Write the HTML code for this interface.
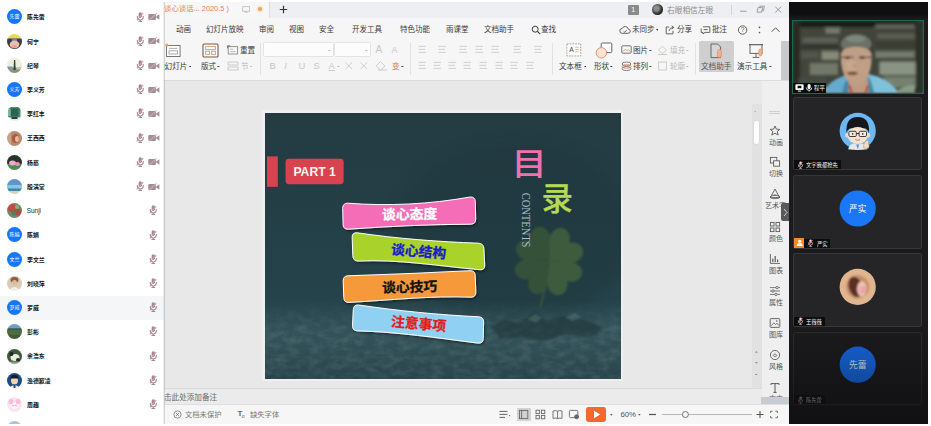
<!DOCTYPE html><html lang="zh"><head><meta charset="utf-8"><title>meeting</title><style>
*{box-sizing:border-box;margin:0;padding:0}
html,body{width:931px;height:426px;overflow:hidden;background:#fff}
body{font-family:"Liberation Sans",sans-serif;position:relative;color:#333}
.a{position:absolute}
.t{position:absolute;white-space:nowrap;line-height:1}
#lp{left:0;top:0;width:164px;height:423.5px;background:#fff;overflow:hidden}
.nm{font-size:5.9px;color:#111;left:26.8px;font-weight:bold}
.av{width:15px;height:15px;border-radius:50%;left:7px;overflow:hidden}
.avb{background:#1677f6;color:#fff;font-size:5px;text-align:center;line-height:15px;white-space:nowrap}
#wps{left:164px;top:2px;width:625px;height:422px;background:#e8e8e8;overflow:hidden}
.mn{font-size:7.45px;color:#3a3a3a;top:23.6px}
.rb{font-size:7.6px;color:#3a3a3a}
.fd{color:#b9b9b9}
.sb{font-size:7px;color:#585858;text-align:center;width:28px;left:0}
#rp{left:789px;top:2px;width:139px;height:421.5px;background:#1b1b1d;overflow:hidden}
.tile{position:absolute;left:4px;width:129.4px;height:73.4px;background:#252527;border:1px solid #37373a;border-radius:2px}
.lab{position:absolute;left:0;bottom:0;height:9px;background:#0c0c0c;color:#fff;font-size:5.3px;line-height:9.8px;white-space:nowrap}
.cj{font-family:"Liberation Sans","Noto Sans CJK SC",sans-serif}
</style></head><body><div id="lp" class="a"><div class="a" style="left:0;top:295.5px;width:164px;height:24.2px;background:#f5f6f8"></div><svg class="a av" style="top:9.4px;background:#1677f6" viewBox="0 0 15 15" role="img" aria-label="先蕾"><text class="cj" x="2.5" y="9.3" font-size="5" fill="#fff">先蕾</text></svg><svg class="a" style="left:26.80px;top:14.30px;overflow:visible" width="18.2" height="5.9" role="img" aria-label="陈先蕾"><text class="cj" x="0" y="5.07" font-size="5.9" font-weight="bold" fill="#111">陈先蕾</text></svg><svg class="a" style="left:136.3px;top:11.5px" width="8.4" height="10.2" viewBox="0 0 9 11"><rect x="2.8" y="0.4" width="3.6" height="6" rx="1.8" fill="#9a8e95"/><path d="M1.4 4.4 v1 a3.2 3.2 0 0 0 6.4 0 v-1" fill="none" stroke="#9a8e95" stroke-width="1.1"/><path d="M4.6 8.6 v1.4 M2.6 10.3 h4" stroke="#9a8e95" stroke-width="1.1"/><path d="M.8 9 L7.8 1.2" stroke="#e8959d" stroke-width="1.2"/></svg><svg class="a" style="left:148.0px;top:13.0px" width="12" height="8" viewBox="0 0 12 8"><rect x=".3" y="1" width="7.6" height="6" rx="1" fill="#9a9096"/><path d="M8.2 3.6 L11.4 1.2 V6.8 L8.2 4.6Z" fill="#9a9096"/><path d="M1 7.4 L8.6 .4" stroke="#eba4aa" stroke-width="1.1"/></svg><svg class="a av" style="top:33.7px" viewBox="0 0 30 30"><g filter="url(#bl1)"><rect width="30" height="30" fill="#4a3a32"/><ellipse cx="15" cy="6" rx="14" ry="8" fill="#ead85c"/><rect x="2" y="9" width="26" height="7" rx="2" fill="#3b3763"/><rect x="10" y="10.4" width="10" height="4" fill="#8e8fa8"/><ellipse cx="15" cy="21" rx="9.6" ry="7.6" fill="#ecc0ae"/><ellipse cx="15" cy="25" rx="5" ry="3" fill="#e79a8e"/></g></svg><svg class="a" style="left:26.80px;top:38.60px;overflow:visible" width="12.3" height="5.9" role="img" aria-label="何宁"><text class="cj" x="0" y="5.07" font-size="5.9" font-weight="bold" fill="#111">何宁</text></svg><svg class="a" style="left:136.3px;top:35.8px" width="8.4" height="10.2" viewBox="0 0 9 11"><rect x="2.8" y="0.4" width="3.6" height="6" rx="1.8" fill="#9a8e95"/><path d="M1.4 4.4 v1 a3.2 3.2 0 0 0 6.4 0 v-1" fill="none" stroke="#9a8e95" stroke-width="1.1"/><path d="M4.6 8.6 v1.4 M2.6 10.3 h4" stroke="#9a8e95" stroke-width="1.1"/><path d="M.8 9 L7.8 1.2" stroke="#e8959d" stroke-width="1.2"/></svg><svg class="a" style="left:148.0px;top:37.3px" width="12" height="8" viewBox="0 0 12 8"><rect x=".3" y="1" width="7.6" height="6" rx="1" fill="#9a9096"/><path d="M8.2 3.6 L11.4 1.2 V6.8 L8.2 4.6Z" fill="#9a9096"/><path d="M1 7.4 L8.6 .4" stroke="#eba4aa" stroke-width="1.1"/></svg><svg class="a av" style="top:57.9px" viewBox="0 0 30 30"><g filter="url(#bl1)"><rect width="30" height="30" fill="#eeeee0"/><rect y="19" width="30" height="11" fill="#8b9171"/><rect x="0" y="17" width="11" height="9" fill="#7f97a3"/><rect x="19" y="18" width="11" height="5" fill="#c9c8ae"/><path d="M14 4 L16.4 4 L17.4 24 L13 24Z" fill="#39403a"/></g></svg><svg class="a" style="left:26.80px;top:62.80px;overflow:visible" width="12.3" height="5.9" role="img" aria-label="纪琴"><text class="cj" x="0" y="5.07" font-size="5.9" font-weight="bold" fill="#111">纪琴</text></svg><svg class="a" style="left:136.3px;top:60.0px" width="8.4" height="10.2" viewBox="0 0 9 11"><rect x="2.8" y="0.4" width="3.6" height="6" rx="1.8" fill="#9a8e95"/><path d="M1.4 4.4 v1 a3.2 3.2 0 0 0 6.4 0 v-1" fill="none" stroke="#9a8e95" stroke-width="1.1"/><path d="M4.6 8.6 v1.4 M2.6 10.3 h4" stroke="#9a8e95" stroke-width="1.1"/><path d="M.8 9 L7.8 1.2" stroke="#e8959d" stroke-width="1.2"/></svg><svg class="a" style="left:148.0px;top:61.5px" width="12" height="8" viewBox="0 0 12 8"><rect x=".3" y="1" width="7.6" height="6" rx="1" fill="#9a9096"/><path d="M8.2 3.6 L11.4 1.2 V6.8 L8.2 4.6Z" fill="#9a9096"/><path d="M1 7.4 L8.6 .4" stroke="#eba4aa" stroke-width="1.1"/></svg><svg class="a av" style="top:82.1px;background:#1677f6" viewBox="0 0 15 15" role="img" aria-label="义芳"><text class="cj" x="2.5" y="9.3" font-size="5" fill="#fff">义芳</text></svg><svg class="a" style="left:26.80px;top:87.00px;overflow:visible" width="18.2" height="5.9" role="img" aria-label="李义芳"><text class="cj" x="0" y="5.07" font-size="5.9" font-weight="bold" fill="#111">李义芳</text></svg><svg class="a" style="left:136.3px;top:84.2px" width="8.4" height="10.2" viewBox="0 0 9 11"><rect x="2.8" y="0.4" width="3.6" height="6" rx="1.8" fill="#9a8e95"/><path d="M1.4 4.4 v1 a3.2 3.2 0 0 0 6.4 0 v-1" fill="none" stroke="#9a8e95" stroke-width="1.1"/><path d="M4.6 8.6 v1.4 M2.6 10.3 h4" stroke="#9a8e95" stroke-width="1.1"/><path d="M.8 9 L7.8 1.2" stroke="#e8959d" stroke-width="1.2"/></svg><svg class="a" style="left:148.0px;top:85.7px" width="12" height="8" viewBox="0 0 12 8"><rect x=".3" y="1" width="7.6" height="6" rx="1" fill="#9a9096"/><path d="M8.2 3.6 L11.4 1.2 V6.8 L8.2 4.6Z" fill="#9a9096"/><path d="M1 7.4 L8.6 .4" stroke="#eba4aa" stroke-width="1.1"/></svg><svg class="a av" style="top:106.3px" viewBox="0 0 30 30"><g filter="url(#bl1)"><rect width="30" height="30" fill="#f3f7f4"/><rect x="2" y="2" width="25" height="21" rx="3" fill="#4a8a72"/><rect x="8" y="5" width="15" height="16" fill="#2d6252"/><rect x="2" y="6" width="5" height="14" fill="#7db49a"/><rect x="9" y="22" width="12" height="4" fill="#27413a"/><rect x="6" y="26" width="18" height="3" fill="#dfe7e3"/></g></svg><svg class="a" style="left:26.80px;top:111.20px;overflow:visible" width="18.2" height="5.9" role="img" aria-label="李红丰"><text class="cj" x="0" y="5.07" font-size="5.9" font-weight="bold" fill="#111">李红丰</text></svg><svg class="a" style="left:136.3px;top:108.4px" width="8.4" height="10.2" viewBox="0 0 9 11"><rect x="2.8" y="0.4" width="3.6" height="6" rx="1.8" fill="#9a8e95"/><path d="M1.4 4.4 v1 a3.2 3.2 0 0 0 6.4 0 v-1" fill="none" stroke="#9a8e95" stroke-width="1.1"/><path d="M4.6 8.6 v1.4 M2.6 10.3 h4" stroke="#9a8e95" stroke-width="1.1"/><path d="M.8 9 L7.8 1.2" stroke="#e8959d" stroke-width="1.2"/></svg><svg class="a" style="left:148.0px;top:109.9px" width="12" height="8" viewBox="0 0 12 8"><rect x=".3" y="1" width="7.6" height="6" rx="1" fill="#9a9096"/><path d="M8.2 3.6 L11.4 1.2 V6.8 L8.2 4.6Z" fill="#9a9096"/><path d="M1 7.4 L8.6 .4" stroke="#eba4aa" stroke-width="1.1"/></svg><svg class="a av" style="top:130.5px" viewBox="0 0 30 30"><g filter="url(#bl1)"><rect width="30" height="30" fill="#b98a6c"/><ellipse cx="17" cy="15" rx="7" ry="9" fill="#a65c48"/><ellipse cx="20" cy="16" rx="4" ry="6" fill="#e5b79a"/><rect x="0" y="0" width="8" height="30" fill="#c9a184"/></g></svg><svg class="a" style="left:26.80px;top:135.40px;overflow:visible" width="18.2" height="5.9" role="img" aria-label="王西西"><text class="cj" x="0" y="5.07" font-size="5.9" font-weight="bold" fill="#111">王西西</text></svg><svg class="a" style="left:136.3px;top:132.6px" width="8.4" height="10.2" viewBox="0 0 9 11"><rect x="2.8" y="0.4" width="3.6" height="6" rx="1.8" fill="#9a8e95"/><path d="M1.4 4.4 v1 a3.2 3.2 0 0 0 6.4 0 v-1" fill="none" stroke="#9a8e95" stroke-width="1.1"/><path d="M4.6 8.6 v1.4 M2.6 10.3 h4" stroke="#9a8e95" stroke-width="1.1"/><path d="M.8 9 L7.8 1.2" stroke="#e8959d" stroke-width="1.2"/></svg><svg class="a" style="left:148.0px;top:134.1px" width="12" height="8" viewBox="0 0 12 8"><rect x=".3" y="1" width="7.6" height="6" rx="1" fill="#9a9096"/><path d="M8.2 3.6 L11.4 1.2 V6.8 L8.2 4.6Z" fill="#9a9096"/><path d="M1 7.4 L8.6 .4" stroke="#eba4aa" stroke-width="1.1"/></svg><svg class="a av" style="top:154.8px" viewBox="0 0 30 30"><g filter="url(#bl1)"><rect width="30" height="30" fill="#27352a"/><rect y="18" width="30" height="12" fill="#4f8a4a"/><ellipse cx="11" cy="16" rx="7" ry="5" fill="#f0a9cf"/><ellipse cx="21" cy="18" rx="5" ry="4" fill="#e98cc0"/></g></svg><svg class="a" style="left:26.80px;top:159.70px;overflow:visible" width="12.3" height="5.9" role="img" aria-label="杨慈"><text class="cj" x="0" y="5.07" font-size="5.9" font-weight="bold" fill="#111">杨慈</text></svg><svg class="a" style="left:136.3px;top:156.9px" width="8.4" height="10.2" viewBox="0 0 9 11"><rect x="2.8" y="0.4" width="3.6" height="6" rx="1.8" fill="#9a8e95"/><path d="M1.4 4.4 v1 a3.2 3.2 0 0 0 6.4 0 v-1" fill="none" stroke="#9a8e95" stroke-width="1.1"/><path d="M4.6 8.6 v1.4 M2.6 10.3 h4" stroke="#9a8e95" stroke-width="1.1"/><path d="M.8 9 L7.8 1.2" stroke="#e8959d" stroke-width="1.2"/></svg><svg class="a" style="left:148.0px;top:158.4px" width="12" height="8" viewBox="0 0 12 8"><rect x=".3" y="1" width="7.6" height="6" rx="1" fill="#9a9096"/><path d="M8.2 3.6 L11.4 1.2 V6.8 L8.2 4.6Z" fill="#9a9096"/><path d="M1 7.4 L8.6 .4" stroke="#eba4aa" stroke-width="1.1"/></svg><svg class="a av" style="top:179.0px" viewBox="0 0 30 30"><g filter="url(#bl1)"><rect width="30" height="30" fill="#5b97c8"/><rect y="12" width="30" height="8" fill="#8fc3df"/><rect y="19" width="30" height="5" fill="#3f86a8"/><rect y="24" width="30" height="6" fill="#d8d2bd"/></g></svg><svg class="a" style="left:26.80px;top:183.90px;overflow:visible" width="18.2" height="5.9" role="img" aria-label="殷满堂"><text class="cj" x="0" y="5.07" font-size="5.9" font-weight="bold" fill="#111">殷满堂</text></svg><svg class="a" style="left:136.3px;top:181.1px" width="8.4" height="10.2" viewBox="0 0 9 11"><rect x="2.8" y="0.4" width="3.6" height="6" rx="1.8" fill="#9a8e95"/><path d="M1.4 4.4 v1 a3.2 3.2 0 0 0 6.4 0 v-1" fill="none" stroke="#9a8e95" stroke-width="1.1"/><path d="M4.6 8.6 v1.4 M2.6 10.3 h4" stroke="#9a8e95" stroke-width="1.1"/><path d="M.8 9 L7.8 1.2" stroke="#e8959d" stroke-width="1.2"/></svg><svg class="a" style="left:148.0px;top:182.6px" width="12" height="8" viewBox="0 0 12 8"><rect x=".3" y="1" width="7.6" height="6" rx="1" fill="#9a9096"/><path d="M8.2 3.6 L11.4 1.2 V6.8 L8.2 4.6Z" fill="#9a9096"/><path d="M1 7.4 L8.6 .4" stroke="#eba4aa" stroke-width="1.1"/></svg><svg class="a av" style="top:203.2px" viewBox="0 0 30 30"><g filter="url(#bl1)"><rect width="30" height="30" fill="#6f8a63"/><circle cx="10" cy="10" r="8" fill="#c44a3f"/><circle cx="21" cy="18" r="7" fill="#b5493f"/><circle cx="14" cy="20" r="5" fill="#4f7d6a"/><circle cx="20" cy="8" r="4" fill="#8fae8a"/></g></svg><div class="t" style="left:26.8px;top:207.6px;font-size:6.4px;color:#222">Sunji</div><svg class="a" style="left:149.2px;top:205.3px" width="8.4" height="10.2" viewBox="0 0 9 11"><rect x="2.8" y="0.4" width="3.6" height="6" rx="1.8" fill="#9a8e95"/><path d="M1.4 4.4 v1 a3.2 3.2 0 0 0 6.4 0 v-1" fill="none" stroke="#9a8e95" stroke-width="1.1"/><path d="M4.6 8.6 v1.4 M2.6 10.3 h4" stroke="#9a8e95" stroke-width="1.1"/><path d="M.8 9 L7.8 1.2" stroke="#e8959d" stroke-width="1.2"/></svg><svg class="a av" style="top:227.4px;background:#1677f6" viewBox="0 0 15 15" role="img" aria-label="陈娟"><text class="cj" x="2.5" y="9.3" font-size="5" fill="#fff">陈娟</text></svg><svg class="a" style="left:26.80px;top:232.30px;overflow:visible" width="12.3" height="5.9" role="img" aria-label="陈娟"><text class="cj" x="0" y="5.07" font-size="5.9" font-weight="bold" fill="#111">陈娟</text></svg><svg class="a" style="left:149.2px;top:229.5px" width="8.4" height="10.2" viewBox="0 0 9 11"><rect x="2.8" y="0.4" width="3.6" height="6" rx="1.8" fill="#9a8e95"/><path d="M1.4 4.4 v1 a3.2 3.2 0 0 0 6.4 0 v-1" fill="none" stroke="#9a8e95" stroke-width="1.1"/><path d="M4.6 8.6 v1.4 M2.6 10.3 h4" stroke="#9a8e95" stroke-width="1.1"/><path d="M.8 9 L7.8 1.2" stroke="#e8959d" stroke-width="1.2"/></svg><svg class="a av" style="top:251.6px;background:#1677f6" viewBox="0 0 15 15" role="img" aria-label="文兰"><text class="cj" x="2.5" y="9.3" font-size="5" fill="#fff">文兰</text></svg><svg class="a" style="left:26.80px;top:256.50px;overflow:visible" width="18.2" height="5.9" role="img" aria-label="李文兰"><text class="cj" x="0" y="5.07" font-size="5.9" font-weight="bold" fill="#111">李文兰</text></svg><svg class="a" style="left:149.2px;top:253.7px" width="8.4" height="10.2" viewBox="0 0 9 11"><rect x="2.8" y="0.4" width="3.6" height="6" rx="1.8" fill="#9a8e95"/><path d="M1.4 4.4 v1 a3.2 3.2 0 0 0 6.4 0 v-1" fill="none" stroke="#9a8e95" stroke-width="1.1"/><path d="M4.6 8.6 v1.4 M2.6 10.3 h4" stroke="#9a8e95" stroke-width="1.1"/><path d="M.8 9 L7.8 1.2" stroke="#e8959d" stroke-width="1.2"/></svg><svg class="a av" style="top:275.9px" viewBox="0 0 30 30"><g filter="url(#bl1)"><rect width="30" height="30" fill="#d6ccb8"/><ellipse cx="15" cy="8" rx="8" ry="6" fill="#8c5f3f"/><ellipse cx="15" cy="13" rx="5" ry="5" fill="#e3b796"/><path d="M3 30 Q15 14 27 30Z" fill="#f1efe8"/></g></svg><svg class="a" style="left:26.80px;top:280.80px;overflow:visible" width="18.2" height="5.9" role="img" aria-label="刘晓萍"><text class="cj" x="0" y="5.07" font-size="5.9" font-weight="bold" fill="#111">刘晓萍</text></svg><svg class="a" style="left:149.2px;top:278.0px" width="8.4" height="10.2" viewBox="0 0 9 11"><rect x="2.8" y="0.4" width="3.6" height="6" rx="1.8" fill="#9a8e95"/><path d="M1.4 4.4 v1 a3.2 3.2 0 0 0 6.4 0 v-1" fill="none" stroke="#9a8e95" stroke-width="1.1"/><path d="M4.6 8.6 v1.4 M2.6 10.3 h4" stroke="#9a8e95" stroke-width="1.1"/><path d="M.8 9 L7.8 1.2" stroke="#e8959d" stroke-width="1.2"/></svg><svg class="a av" style="top:300.1px;background:#1677f6" viewBox="0 0 15 15" role="img" aria-label="罗威"><text class="cj" x="2.5" y="9.3" font-size="5" fill="#fff">罗威</text></svg><svg class="a" style="left:26.80px;top:305.00px;overflow:visible" width="12.3" height="5.9" role="img" aria-label="罗威"><text class="cj" x="0" y="5.07" font-size="5.9" font-weight="bold" fill="#111">罗威</text></svg><svg class="a" style="left:149.2px;top:302.2px" width="8.4" height="10.2" viewBox="0 0 9 11"><rect x="2.8" y="0.4" width="3.6" height="6" rx="1.8" fill="#9a8e95"/><path d="M1.4 4.4 v1 a3.2 3.2 0 0 0 6.4 0 v-1" fill="none" stroke="#9a8e95" stroke-width="1.1"/><path d="M4.6 8.6 v1.4 M2.6 10.3 h4" stroke="#9a8e95" stroke-width="1.1"/><path d="M.8 9 L7.8 1.2" stroke="#e8959d" stroke-width="1.2"/></svg><svg class="a av" style="top:324.3px" viewBox="0 0 30 30"><g filter="url(#bl1)"><rect width="30" height="30" fill="#4d6a3f"/><rect width="30" height="9" fill="#6f9fc4"/><rect y="9" width="30" height="3" fill="#3d5d54"/><rect y="22" width="30" height="8" fill="#3f5a36"/></g></svg><svg class="a" style="left:26.80px;top:329.20px;overflow:visible" width="12.3" height="5.9" role="img" aria-label="彭彬"><text class="cj" x="0" y="5.07" font-size="5.9" font-weight="bold" fill="#111">彭彬</text></svg><svg class="a" style="left:149.2px;top:326.4px" width="8.4" height="10.2" viewBox="0 0 9 11"><rect x="2.8" y="0.4" width="3.6" height="6" rx="1.8" fill="#9a8e95"/><path d="M1.4 4.4 v1 a3.2 3.2 0 0 0 6.4 0 v-1" fill="none" stroke="#9a8e95" stroke-width="1.1"/><path d="M4.6 8.6 v1.4 M2.6 10.3 h4" stroke="#9a8e95" stroke-width="1.1"/><path d="M.8 9 L7.8 1.2" stroke="#e8959d" stroke-width="1.2"/></svg><svg class="a av" style="top:348.5px" viewBox="0 0 30 30"><g filter="url(#bl1)"><rect width="30" height="30" fill="#3d5a3c"/><ellipse cx="16" cy="17" rx="9" ry="7" fill="#ecece6"/><circle cx="9" cy="10" r="4" fill="#222"/><circle cx="22" cy="22" r="4" fill="#2a2a2a"/><rect y="25" width="30" height="5" fill="#8aa07c"/></g></svg><svg class="a" style="left:26.80px;top:353.40px;overflow:visible" width="18.2" height="5.9" role="img" aria-label="余浩东"><text class="cj" x="0" y="5.07" font-size="5.9" font-weight="bold" fill="#111">余浩东</text></svg><svg class="a" style="left:149.2px;top:350.6px" width="8.4" height="10.2" viewBox="0 0 9 11"><rect x="2.8" y="0.4" width="3.6" height="6" rx="1.8" fill="#9a8e95"/><path d="M1.4 4.4 v1 a3.2 3.2 0 0 0 6.4 0 v-1" fill="none" stroke="#9a8e95" stroke-width="1.1"/><path d="M4.6 8.6 v1.4 M2.6 10.3 h4" stroke="#9a8e95" stroke-width="1.1"/><path d="M.8 9 L7.8 1.2" stroke="#e8959d" stroke-width="1.2"/></svg><svg class="a av" style="top:372.7px" viewBox="0 0 30 30"><g filter="url(#bl1)"><rect width="30" height="30" fill="#1f4c86"/><ellipse cx="15" cy="15" rx="7" ry="8" fill="#f0d2b5"/><path d="M7 12 Q15 0 23 12 L23 9 Q15 -2 7 9Z" fill="#1a1a22"/><rect x="8" y="5" width="14" height="6" fill="#1a1a22"/><path d="M4 30 Q15 18 26 30Z" fill="#e8eef5"/><rect x="13" y="23" width="4" height="7" fill="#27436b"/></g></svg><svg class="a" style="left:26.80px;top:377.60px;overflow:visible" width="24.1" height="5.9" role="img" aria-label="渔德歉凌"><text class="cj" x="0" y="5.07" font-size="5.9" font-weight="bold" fill="#111">渔德歉凌</text></svg><svg class="a" style="left:149.2px;top:374.8px" width="8.4" height="10.2" viewBox="0 0 9 11"><rect x="2.8" y="0.4" width="3.6" height="6" rx="1.8" fill="#9a8e95"/><path d="M1.4 4.4 v1 a3.2 3.2 0 0 0 6.4 0 v-1" fill="none" stroke="#9a8e95" stroke-width="1.1"/><path d="M4.6 8.6 v1.4 M2.6 10.3 h4" stroke="#9a8e95" stroke-width="1.1"/><path d="M.8 9 L7.8 1.2" stroke="#e8959d" stroke-width="1.2"/></svg><svg class="a av" style="top:397.0px" viewBox="0 0 30 30"><g filter="url(#bl1)"><rect width="30" height="30" fill="#fbe3ef"/><ellipse cx="15" cy="17" rx="8" ry="7" fill="#fff3f5"/><circle cx="8" cy="9" r="5" fill="#f5bdd8"/><circle cx="22" cy="9" r="5" fill="#f5bdd8"/><circle cx="12" cy="17" r="1.3" fill="#c89"/><circle cx="18" cy="17" r="1.3" fill="#c89"/></g></svg><svg class="a" style="left:26.80px;top:401.90px;overflow:visible" width="12.3" height="5.9" role="img" aria-label="周趣"><text class="cj" x="0" y="5.07" font-size="5.9" font-weight="bold" fill="#111">周趣</text></svg><svg class="a" style="left:149.2px;top:399.1px" width="8.4" height="10.2" viewBox="0 0 9 11"><rect x="2.8" y="0.4" width="3.6" height="6" rx="1.8" fill="#9a8e95"/><path d="M1.4 4.4 v1 a3.2 3.2 0 0 0 6.4 0 v-1" fill="none" stroke="#9a8e95" stroke-width="1.1"/><path d="M4.6 8.6 v1.4 M2.6 10.3 h4" stroke="#9a8e95" stroke-width="1.1"/><path d="M.8 9 L7.8 1.2" stroke="#e8959d" stroke-width="1.2"/></svg><svg class="a av" style="top:421.2px" viewBox="0 0 30 30"><g filter="url(#bl1)"><rect width="30" height="30" fill="#a9c4d6"/></g></svg></div><div id="wps" class="a"><div class="a" style="left:0;top:0;width:625px;height:16px;background:#eeeff2"></div><div class="a" style="left:0;top:0;width:105.5px;height:16px;background:#f7f7f7;border-right:1px solid #dcdde0"></div><svg class="a" style="left:0.00px;top:3.40px;overflow:visible" width="64.7" height="7.4" role="img" aria-label="谈心谈话... 2020.5 )"><text class="cj" x="0" y="6.36" font-size="7.4" fill="#e8854a">谈心谈话... 2020.5 )</text></svg><svg class="a" style="left:78px;top:3.5px" width="8.4" height="7.6" viewBox="0 0 10 9"><rect x=".8" y=".8" width="8.4" height="5.4" fill="none" stroke="#b5b5b5" stroke-width=".9"/><path d="M5 6.2 V8 M3 8.3 H7" stroke="#b5b5b5" stroke-width=".9"/></svg><div class="a" style="left:93.8px;top:5px;width:4.4px;height:4.4px;border-radius:50%;background:#e9a55c;box-shadow:0 0 0 1.5px #f7e6d2"></div><svg class="a" style="left:115.0px;top:3px" width="9" height="9" viewBox="0 0 9 9"><path d="M4.5 .8 V8.2 M.8 4.5 H8.2" stroke="#333" stroke-width="1.2"/></svg><div class="a" style="left:464px;top:3.2px;width:10.5px;height:9.6px;background:#8a8a8a;color:#fff;font-size:7px;line-height:9.6px;text-align:center;border-radius:1px">1</div><div class="a" style="left:488px;top:2.4px;width:10.6px;height:10.6px;border-radius:50%;background:radial-gradient(circle at 40% 40%,#8b8b8b 0 25%,#2a2a2a 60%)"></div><svg class="a" style="left:503.00px;top:3.80px;overflow:visible" width="46.7" height="7.7" role="img" aria-label="右眼相信左眼"><text class="cj" x="0" y="6.62" font-size="7.7" fill="#8c8c8c">右眼相信左眼</text></svg><div class="a" style="left:567px;top:3px;width:1px;height:10px;background:#d2d2d2"></div><svg class="a" style="left:574px;top:2px" width="50" height="12" viewBox="0 0 50 12"><path d="M2 7.2 H8.6" stroke="#999" stroke-width="1"/><path d="M19.3 3.6 h4.6 v4.6 h-4.6z M20.8 3.6 V2.2 h4.6 v4.6 h-1.4" fill="none" stroke="#999" stroke-width=".9" transform="skewX(-12) translate(1.5 0)"/><path d="M37.2 2.6 L43.2 8.6 M43.2 2.6 L37.2 8.6" stroke="#999" stroke-width="1"/></svg><div class="a" style="left:0;top:16px;width:625px;height:62.6px;background:#f6f6f6;border-bottom:1px solid #dcdcdc"></div><svg class="a" style="left:12.00px;top:23.60px;overflow:visible" width="15.4" height="7.5" role="img" aria-label="动画"><text class="cj" x="0" y="6.41" font-size="7.5" fill="#3a3a3a">动画</text></svg><svg class="a" style="left:41.60px;top:23.60px;overflow:visible" width="37.8" height="7.5" role="img" aria-label="幻灯片放映"><text class="cj" x="0" y="6.41" font-size="7.5" fill="#3a3a3a">幻灯片放映</text></svg><svg class="a" style="left:95.00px;top:23.60px;overflow:visible" width="15.4" height="7.5" role="img" aria-label="审阅"><text class="cj" x="0" y="6.41" font-size="7.5" fill="#3a3a3a">审阅</text></svg><svg class="a" style="left:125.20px;top:23.60px;overflow:visible" width="15.4" height="7.5" role="img" aria-label="视图"><text class="cj" x="0" y="6.41" font-size="7.5" fill="#3a3a3a">视图</text></svg><svg class="a" style="left:155.00px;top:23.60px;overflow:visible" width="15.4" height="7.5" role="img" aria-label="安全"><text class="cj" x="0" y="6.41" font-size="7.5" fill="#3a3a3a">安全</text></svg><svg class="a" style="left:187.50px;top:23.60px;overflow:visible" width="30.3" height="7.5" role="img" aria-label="开发工具"><text class="cj" x="0" y="6.41" font-size="7.5" fill="#3a3a3a">开发工具</text></svg><svg class="a" style="left:235.50px;top:23.60px;overflow:visible" width="30.3" height="7.5" role="img" aria-label="特色功能"><text class="cj" x="0" y="6.41" font-size="7.5" fill="#3a3a3a">特色功能</text></svg><svg class="a" style="left:282.00px;top:23.60px;overflow:visible" width="22.9" height="7.5" role="img" aria-label="雨课堂"><text class="cj" x="0" y="6.41" font-size="7.5" fill="#3a3a3a">雨课堂</text></svg><svg class="a" style="left:320.00px;top:23.60px;overflow:visible" width="30.3" height="7.5" role="img" aria-label="文档助手"><text class="cj" x="0" y="6.41" font-size="7.5" fill="#3a3a3a">文档助手</text></svg><svg class="a" style="left:376.50px;top:23.60px;overflow:visible" width="15.4" height="7.5" role="img" aria-label="查找"><text class="cj" x="0" y="6.41" font-size="7.5" fill="#3a3a3a">查找</text></svg><svg class="a" style="left:366.6px;top:22.6px" width="10" height="10" viewBox="0 0 10 10"><circle cx="4.2" cy="4.2" r="3" fill="none" stroke="#3a3a3a" stroke-width="1"/><path d="M6.4 6.4 L9.2 9.2" stroke="#3a3a3a" stroke-width="1.1"/></svg><svg class="a" style="left:455.0px;top:22.5px" width="12" height="10" viewBox="0 0 12 10"><path d="M3.2 8.3 a2.4 2.4 0 0 1 0-4.8 a3.2 3.2 0 0 1 6.1.6 a2.1 2.1 0 0 1 -.3 4.2 z" fill="none" stroke="#555" stroke-width=".9"/><path d="M4.6 6.2 l1.2 1.1 l2-2.3" fill="none" stroke="#555" stroke-width=".8"/></svg><svg class="a" style="left:467.50px;top:23.60px;overflow:visible" width="22.9" height="7.5" role="img" aria-label="未同步"><text class="cj" x="0" y="6.41" font-size="7.5" fill="#3a3a3a">未同步</text></svg><svg class="a" style="left:491.80px;top:27.10px" width="2.70" height="1.70"><path d="M0 0 H2.70 L1.35 1.70Z" fill="#3a3a3a"/></svg><svg class="a" style="left:500.5px;top:22.5px" width="10" height="10" viewBox="0 0 10 10"><path d="M4.2 2 H1.2 V8.8 H8 V5.8" fill="none" stroke="#555" stroke-width=".9"/><path d="M4 6 Q4.4 2.6 8.6 2.4 M6.6 .8 L8.8 2.4 L6.8 4.2" fill="none" stroke="#555" stroke-width=".9"/></svg><svg class="a" style="left:512.80px;top:23.60px;overflow:visible" width="15.4" height="7.5" role="img" aria-label="分享"><text class="cj" x="0" y="6.41" font-size="7.5" fill="#3a3a3a">分享</text></svg><svg class="a" style="left:535.5px;top:22.5px" width="11" height="10" viewBox="0 0 11 10"><path d="M3 1.8 H9.8 V7.4 H5 L3 9 V7.4 H1.2 V3.6" fill="none" stroke="#555" stroke-width=".9"/><path d="M3.6 4.6 H7.6" stroke="#555" stroke-width=".9"/></svg><svg class="a" style="left:548.20px;top:23.60px;overflow:visible" width="15.4" height="7.5" role="img" aria-label="批注"><text class="cj" x="0" y="6.41" font-size="7.5" fill="#3a3a3a">批注</text></svg><svg class="a" style="left:572.6px;top:21.6px" width="48" height="12" viewBox="0 0 48 12"><circle cx="5.6" cy="6" r="4.2" fill="none" stroke="#555" stroke-width=".9"/><text x="5.6" y="8.4" font-size="6.6" text-anchor="middle" fill="#555" font-family="Liberation Sans">?</text><circle cx="22.5" cy="3.4" r=".8" fill="#555"/><circle cx="22.5" cy="8.6" r=".8" fill="#555"/><path d="M34.6 7.8 L38.6 3.8 L42.6 7.8" fill="none" stroke="#555" stroke-width="1"/></svg><svg class="a" style="left:0.5px;top:40.5px" width="17" height="15" viewBox="0 0 17 15"><rect x="1.5" y="2.5" width="13.6" height="11" fill="#fff" stroke="#777" stroke-width="1"/><rect x="4" y="7.8" width="8.4" height="3.2" fill="none" stroke="#999" stroke-width=".8"/><path d="M4 5.4 H12.4" stroke="#999" stroke-width=".8"/><circle cx="1.8" cy="2.2" r="1.6" fill="#f0a057"/></svg><svg class="a" style="left:-7.40px;top:60.00px;overflow:visible" width="30.9" height="7.6" role="img" aria-label="建幻灯片"><text class="cj" x="0" y="6.54" font-size="7.6" fill="#3a3a3a">建幻灯片</text></svg><svg class="a" style="left:24.50px;top:63.50px" width="2.70" height="1.70"><path d="M0 0 H2.70 L1.35 1.70Z" fill="#3a3a3a"/></svg><svg class="a" style="left:38.0px;top:41.0px" width="17" height="15" viewBox="0 0 17 15"><rect x="1" y="1" width="15" height="13" rx="1" fill="#fff" stroke="#6a5a50" stroke-width="1.1"/><rect x="3.6" y="3.6" width="9.8" height="2.8" fill="none" stroke="#e0936a" stroke-width=".9"/><rect x="3.6" y="8.2" width="4" height="3.2" fill="none" stroke="#e0936a" stroke-width=".9"/><rect x="9.4" y="8.2" width="4" height="3.2" fill="none" stroke="#e0936a" stroke-width=".9"/></svg><svg class="a" style="left:36.60px;top:60.00px;overflow:visible" width="15.7" height="7.6" role="img" aria-label="版式"><text class="cj" x="0" y="6.54" font-size="7.6" fill="#3a3a3a">版式</text></svg><svg class="a" style="left:52.90px;top:63.50px" width="2.70" height="1.70"><path d="M0 0 H2.70 L1.35 1.70Z" fill="#3a3a3a"/></svg><svg class="a" style="left:62.6px;top:42.6px" width="12" height="10" viewBox="0 0 12 10"><rect x="1.2" y="1.6" width="9.4" height="7.4" fill="none" stroke="#8a8a8a" stroke-width=".9"/><path d="M3.4 6.6 H8.6 M3.4 4.2 H6" stroke="#aaa" stroke-width=".8"/><path d="M.6 3.4 V.8 H3.2" fill="none" stroke="#666" stroke-width=".9"/></svg><svg class="a" style="left:75.60px;top:44.20px;overflow:visible" width="15.7" height="7.6" role="img" aria-label="重置"><text class="cj" x="0" y="6.54" font-size="7.6" fill="#3a3a3a">重置</text></svg><svg class="a" style="left:63.0px;top:59.0px" width="12" height="10" viewBox="0 0 12 10"><rect x="1" y="1" width="10" height="3" fill="none" stroke="#c4c4c4" stroke-width=".8"/><rect x="1" y="6" width="10" height="3" fill="none" stroke="#c4c4c4" stroke-width=".8"/></svg><svg class="a" style="left:76.60px;top:60.00px;overflow:visible" width="8.1" height="7.6" role="img" aria-label="节"><text class="cj" x="0" y="6.54" font-size="7.6" fill="#b9b9b9">节</text></svg><svg class="a" style="left:85.50px;top:63.50px" width="2.70" height="1.70"><path d="M0 0 H2.70 L1.35 1.70Z" fill="#b9b9b9"/></svg><div class="a" style="left:95.6px;top:41.0px;width:1px;height:32px;background:#e2e2e2"></div><div class="a" style="left:99.0px;top:39.6px;width:71px;height:15px;background:#fcfcfc;border:1px solid #e4e4e4;border-radius:1.5px"></div><div class="a" style="left:169.5px;top:39.6px;width:37px;height:15px;background:#fcfcfc;border:1px solid #e4e4e4;border-radius:1.5px"></div><svg class="a" style="left:164.30px;top:47.50px" width="2.70" height="1.70"><path d="M0 0 H2.70 L1.35 1.70Z" fill="#b9b9b9"/></svg><svg class="a" style="left:201.30px;top:47.50px" width="2.70" height="1.70"><path d="M0 0 H2.70 L1.35 1.70Z" fill="#b9b9b9"/></svg><div class="t fd" style="left:211.6px;top:43.0px;font-size:10px;color:#c6c6c6">A</div><div class="t fd" style="left:227.4px;top:43.8px;font-size:9px;color:#c6c6c6">A</div><div class="t" style="left:105.4px;top:59.0px;font-size:9.4px;color:#c4c4c4;">B</div><div class="t" style="left:120.2px;top:59.0px;font-size:9.4px;color:#c8c8c8;font-style:italic;">I</div><div class="t" style="left:134.4px;top:59.0px;font-size:9.4px;color:#c8c8c8;">U</div><div class="t" style="left:149.4px;top:59.0px;font-size:9.4px;color:#c8c8c8;">S</div><div class="t" style="left:164.6px;top:59.0px;font-size:9.4px;color:#c8c8c8;text-decoration:underline;">A</div><svg class="a" style="left:173.30px;top:63.50px" width="2.70" height="1.70"><path d="M0 0 H2.70 L1.35 1.70Z" fill="#b9b9b9"/></svg><svg class="a" style="left:180.0px;top:58.0px" width="48" height="11" viewBox="0 0 48 11"><g fill="none" stroke="#cbcbcb" stroke-width=".9"><path d="M1.5 2.6 L8 9 M8 2.6 L1.5 9"/><path d="M16.5 2.6 L23 9 M23 2.6 L16.5 9"/><path d="M32 6 L36.4 1.6 L41 6 L36.6 10 Z M34 10 H43"/></g></svg><svg class="a" style="left:228.20px;top:59.60px;overflow:visible" width="8.1" height="7.6" role="img" aria-label="变"><text class="cj" x="0" y="6.54" font-size="7.6" fill="#d07b55">变</text></svg><svg class="a" style="left:237.30px;top:63.50px" width="2.70" height="1.70"><path d="M0 0 H2.70 L1.35 1.70Z" fill="#3a3a3a"/></svg><div class="a" style="left:245.6px;top:41.0px;width:1px;height:32px;background:#e2e2e2"></div><svg class="a" style="left:253.5px;top:43.4px" width="9" height="9" viewBox="0 0 9 9"><path d="M.5 1.4 H8 M.5 4.4 H7 M.5 7.4 H8" stroke="#cdcdcd" stroke-width=".9"/></svg><svg class="a" style="left:273.5px;top:43.4px" width="9" height="9" viewBox="0 0 9 9"><path d="M.5 1.4 H8 M.5 4.4 H7 M.5 7.4 H8" stroke="#cdcdcd" stroke-width=".9"/></svg><svg class="a" style="left:295.0px;top:43.4px" width="9" height="9" viewBox="0 0 9 9"><path d="M.5 1.4 H8 M.5 4.4 H7 M.5 7.4 H8" stroke="#cdcdcd" stroke-width=".9"/></svg><svg class="a" style="left:310.5px;top:43.4px" width="9" height="9" viewBox="0 0 9 9"><path d="M.5 1.4 H8 M.5 4.4 H7 M.5 7.4 H8" stroke="#cdcdcd" stroke-width=".9"/></svg><svg class="a" style="left:326.8px;top:43.4px" width="9" height="9" viewBox="0 0 9 9"><path d="M.5 1.4 H8 M.5 4.4 H7 M.5 7.4 H8" stroke="#cdcdcd" stroke-width=".9"/></svg><svg class="a" style="left:348.5px;top:43.4px" width="9" height="9" viewBox="0 0 9 9"><path d="M.5 1.4 H8 M.5 4.4 H7 M.5 7.4 H8" stroke="#cdcdcd" stroke-width=".9"/></svg><svg class="a" style="left:369.5px;top:43.4px" width="9" height="9" viewBox="0 0 9 9"><path d="M.5 1.4 H8 M.5 4.4 H7 M.5 7.4 H8" stroke="#cdcdcd" stroke-width=".9"/></svg><svg class="a" style="left:253.5px;top:59.4px" width="9" height="9" viewBox="0 0 9 9"><path d="M.5 1.4 H8 M.5 4.4 H7 M.5 7.4 H8" stroke="#cdcdcd" stroke-width=".9"/></svg><svg class="a" style="left:268.5px;top:59.4px" width="9" height="9" viewBox="0 0 9 9"><path d="M.5 1.4 H8 M.5 4.4 H7 M.5 7.4 H8" stroke="#cdcdcd" stroke-width=".9"/></svg><svg class="a" style="left:283.5px;top:59.4px" width="9" height="9" viewBox="0 0 9 9"><path d="M.5 1.4 H8 M.5 4.4 H7 M.5 7.4 H8" stroke="#cdcdcd" stroke-width=".9"/></svg><svg class="a" style="left:298.5px;top:59.4px" width="9" height="9" viewBox="0 0 9 9"><path d="M.5 1.4 H8 M.5 4.4 H7 M.5 7.4 H8" stroke="#cdcdcd" stroke-width=".9"/></svg><svg class="a" style="left:314.5px;top:59.4px" width="9" height="9" viewBox="0 0 9 9"><path d="M.5 1.4 H8 M.5 4.4 H7 M.5 7.4 H8" stroke="#cdcdcd" stroke-width=".9"/></svg><svg class="a" style="left:330.5px;top:59.4px" width="9" height="9" viewBox="0 0 9 9"><path d="M.5 1.4 H8 M.5 4.4 H7 M.5 7.4 H8" stroke="#cdcdcd" stroke-width=".9"/></svg><svg class="a" style="left:346.0px;top:59.4px" width="9" height="9" viewBox="0 0 9 9"><path d="M.5 1.4 H8 M.5 4.4 H7 M.5 7.4 H8" stroke="#cdcdcd" stroke-width=".9"/></svg><svg class="a" style="left:361.5px;top:59.4px" width="9" height="9" viewBox="0 0 9 9"><path d="M.5 1.4 H8 M.5 4.4 H7 M.5 7.4 H8" stroke="#cdcdcd" stroke-width=".9"/></svg><div class="a" style="left:387.6px;top:41.0px;width:1px;height:32px;background:#e2e2e2"></div><svg class="a" style="left:402.4px;top:41.4px" width="15.6" height="13.8" viewBox="0 0 18 16"><rect x="1" y="1" width="16" height="14" fill="#fff" stroke="#8a8a8a" stroke-width=".9" stroke-dasharray="2 1.2"/><text x="6.4" y="10.4" font-size="8" fill="#444" font-family="Liberation Sans" text-anchor="middle">A</text><path d="M10.6 5 H14.6 M10.6 7.6 H14.6 M10.6 10.2 H14.6" stroke="#e0936a" stroke-width=".8"/></svg><svg class="a" style="left:395.40px;top:60.00px;overflow:visible" width="23.3" height="7.6" role="img" aria-label="文本框"><text class="cj" x="0" y="6.54" font-size="7.6" fill="#3a3a3a">文本框</text></svg><svg class="a" style="left:419.50px;top:63.50px" width="2.70" height="1.70"><path d="M0 0 H2.70 L1.35 1.70Z" fill="#3a3a3a"/></svg><svg class="a" style="left:431.0px;top:40.0px" width="18" height="17" viewBox="0 0 18 17"><rect x="6.2" y="1" width="10.6" height="9.6" rx="1" fill="#fff" stroke="#666" stroke-width="1"/><circle cx="6.4" cy="10.8" r="5.2" fill="#fbe4d9" stroke="#e0936a" stroke-width="1"/></svg><svg class="a" style="left:429.80px;top:60.00px;overflow:visible" width="15.7" height="7.6" role="img" aria-label="形状"><text class="cj" x="0" y="6.54" font-size="7.6" fill="#3a3a3a">形状</text></svg><svg class="a" style="left:446.10px;top:63.50px" width="2.70" height="1.70"><path d="M0 0 H2.70 L1.35 1.70Z" fill="#3a3a3a"/></svg><svg class="a" style="left:456.6px;top:43.2px" width="11" height="9" viewBox="0 0 11 9"><rect x=".8" y=".8" width="9.4" height="7.4" rx=".8" fill="none" stroke="#666" stroke-width=".9"/><path d="M2 6.8 L4.4 4.2 L6 5.8 L7.4 4.6 L9.4 6.8" fill="none" stroke="#e0936a" stroke-width=".8"/></svg><svg class="a" style="left:469.00px;top:44.20px;overflow:visible" width="15.7" height="7.6" role="img" aria-label="图片"><text class="cj" x="0" y="6.54" font-size="7.6" fill="#3a3a3a">图片</text></svg><svg class="a" style="left:485.30px;top:47.70px" width="2.70" height="1.70"><path d="M0 0 H2.70 L1.35 1.70Z" fill="#3a3a3a"/></svg><svg class="a" style="left:456.6px;top:58.6px" width="11" height="10" viewBox="0 0 11 10"><ellipse cx="5.5" cy="3" rx="4.4" ry="2" fill="none" stroke="#666" stroke-width=".8"/><ellipse cx="5.5" cy="5.4" rx="4.4" ry="2" fill="none" stroke="#e0936a" stroke-width=".8"/><ellipse cx="5.5" cy="7.6" rx="4.4" ry="2" fill="none" stroke="#666" stroke-width=".8"/></svg><svg class="a" style="left:469.00px;top:60.00px;overflow:visible" width="15.7" height="7.6" role="img" aria-label="排列"><text class="cj" x="0" y="6.54" font-size="7.6" fill="#3a3a3a">排列</text></svg><svg class="a" style="left:485.30px;top:63.50px" width="2.70" height="1.70"><path d="M0 0 H2.70 L1.35 1.70Z" fill="#3a3a3a"/></svg><svg class="a" style="left:493.4px;top:42.8px" width="11" height="10" viewBox="0 0 11 10"><path d="M1.4 5 L5.4 1.2 L9.4 5 L5.4 8.6 Z" fill="none" stroke="#c8c8c8" stroke-width=".9"/><path d="M1 9.4 H10" stroke="#d8c0b0" stroke-width="1"/></svg><svg class="a" style="left:505.80px;top:44.20px;overflow:visible" width="15.7" height="7.6" role="img" aria-label="填充"><text class="cj" x="0" y="6.54" font-size="7.6" fill="#b9b9b9">填充</text></svg><svg class="a" style="left:522.30px;top:47.70px" width="2.70" height="1.70"><path d="M0 0 H2.70 L1.35 1.70Z" fill="#b9b9b9"/></svg><svg class="a" style="left:493.4px;top:58.6px" width="11" height="10" viewBox="0 0 11 10"><rect x="1.6" y="1" width="7.8" height="8" fill="none" stroke="#c8c8c8" stroke-width=".9"/></svg><svg class="a" style="left:505.80px;top:60.00px;overflow:visible" width="15.7" height="7.6" role="img" aria-label="轮廓"><text class="cj" x="0" y="6.54" font-size="7.6" fill="#b9b9b9">轮廓</text></svg><svg class="a" style="left:522.30px;top:63.50px" width="2.70" height="1.70"><path d="M0 0 H2.70 L1.35 1.70Z" fill="#b9b9b9"/></svg><div class="a" style="left:531.0px;top:41.0px;width:1px;height:32px;background:#e2e2e2"></div><div class="a" style="left:534.6px;top:39.4px;width:35.4px;height:30.6px;background:#cfcfcf;border-radius:1.5px"></div><svg class="a" style="left:545.0px;top:41.0px" width="15" height="16" viewBox="0 0 15 16"><path d="M2 1 H8.6 L11.6 4 V14.6 H2 Z" fill="#d6d6d6" stroke="#666" stroke-width="1"/><rect x="8.4" y="6.4" width="4" height="8" rx="2" fill="#f0b184" stroke="#e0936a" stroke-width=".7"/></svg><svg class="a" style="left:537.00px;top:60.00px;overflow:visible" width="30.9" height="7.6" role="img" aria-label="文档助手"><text class="cj" x="0" y="6.54" font-size="7.6" fill="#555">文档助手</text></svg><svg class="a" style="left:584.0px;top:41.0px" width="17" height="16" viewBox="0 0 17 16"><path d="M1 1.6 H15" stroke="#555" stroke-width="1.2"/><rect x="2" y="1.8" width="12" height="8.6" fill="#f7f7f7" stroke="#666" stroke-width="1"/><path d="M8 10.4 V14 M4.6 14.4 H11.4" stroke="#666" stroke-width="1"/><rect x="10.8" y="6" width="3.2" height="7" rx="1.6" fill="#f0b184" stroke="#e0936a" stroke-width=".7"/></svg><svg class="a" style="left:573.40px;top:60.00px;overflow:visible" width="30.9" height="7.6" role="img" aria-label="演示工具"><text class="cj" x="0" y="6.54" font-size="7.6" fill="#3a3a3a">演示工具</text></svg><svg class="a" style="left:605.30px;top:63.50px" width="2.70" height="1.70"><path d="M0 0 H2.70 L1.35 1.70Z" fill="#3a3a3a"/></svg><div class="a" style="left:617.0px;top:39.4px;width:8px;height:38.4px;background:#c9c9cb"></div><div class="a" style="left:98.0px;top:108.0px;width:361px;height:271px;background:#efefef"></div><svg class="a" style="left:101px;top:111px" width="356" height="266" viewBox="0 0 356 266"><defs><linearGradient id="sbg" x1="0" y1="0" x2="0" y2="1"><stop offset="0" stop-color="#243b41"/><stop offset=".5" stop-color="#244048"/><stop offset=".74" stop-color="#26444c"/><stop offset="1" stop-color="#27434a"/></linearGradient><linearGradient id="gnd" x1="0" y1="0" x2="0" y2="1"><stop offset="0" stop-color="#37575e" stop-opacity="0"/><stop offset=".4" stop-color="#37575e" stop-opacity=".75"/><stop offset="1" stop-color="#29454b" stop-opacity=".95"/></linearGradient><filter id="bl3" x="-20%" y="-20%" width="140%" height="140%"><feGaussianBlur stdDeviation="3"/></filter><filter id="bl15" x="-20%" y="-20%" width="140%" height="140%"><feGaussianBlur stdDeviation="1.3"/></filter><filter id="bl6" x="-30%" y="-30%" width="160%" height="160%"><feGaussianBlur stdDeviation="7"/></filter><filter id="nz" x="0" y="0" width="100%" height="100%"><feTurbulence type="fractalNoise" baseFrequency=".09 .16" numOctaves="3" seed="7"/><feColorMatrix values="0 0 0 0 .75  0 0 0 0 .9  0 0 0 0 .92  0 0 0 -1.6 1.05"/></filter><filter id="sh" x="-10%" y="-20%" width="120%" height="150%"><feDropShadow dx="1" dy="1.6" stdDeviation="1.3" flood-color="#000" flood-opacity=".45"/></filter></defs><rect width="356" height="266" fill="url(#sbg)"/><ellipse cx="250" cy="120" rx="120" ry="90" fill="#1f3338" opacity=".35" filter="url(#bl6)"/><mask id="gm"><linearGradient id="gmg" x1="0" y1="0" x2="0" y2="1"><stop offset="0" stop-color="#000"/><stop offset=".35" stop-color="#fff"/></linearGradient><rect x="0" y="188" width="356" height="78" fill="url(#gmg)"/></mask><rect x="0" y="188" width="356" height="78" fill="url(#gnd)"/><g mask="url(#gm)"><rect x="0" y="188" width="356" height="78" filter="url(#nz)" opacity=".12"/></g><path d="M226 214 l14 -8 l12 5 l16 -11 l14 8 l20 -6 l22 6 l14 8 l-12 8 l-26 -3 l-20 7 l-26 -4 l-18 2z" fill="#1d3035" opacity=".55" filter="url(#bl15)"/><path d="M262 206 l8 -5 l7 4 l-6 5z M300 204 l10 -4 l6 5 l-9 3z" fill="#5f7f80" opacity=".45" filter="url(#bl15)"/><g opacity=".82" filter="url(#bl15)" fill="#3a5637"><path transform="translate(284.0 148.0) rotate(-42.0)" d="M0 0 C-6 -8 -21 -14 -19 -26 C-17 -36 -5 -36 0 -27 C5 -36 17 -36 19 -26 C21 -14 6 -8 0 0Z"/><path transform="translate(284.0 148.0) rotate(48.0)" d="M0 0 C-6 -8 -21 -14 -19 -26 C-17 -36 -5 -36 0 -27 C5 -36 17 -36 19 -26 C21 -14 6 -8 0 0Z"/><path transform="translate(284.0 148.0) rotate(138.0)" d="M0 0 C-6 -8 -21 -14 -19 -26 C-17 -36 -5 -36 0 -27 C5 -36 17 -36 19 -26 C21 -14 6 -8 0 0Z"/><path transform="translate(284.0 148.0) rotate(-132.0)" d="M0 0 C-6 -8 -21 -14 -19 -26 C-17 -36 -5 -36 0 -27 C5 -36 17 -36 19 -26 C21 -14 6 -8 0 0Z"/><path d="M284.0 148.0 Q282.0 173.0 275.0 194.0" stroke="#3a5538" stroke-width="2.4" fill="none"/></g><g opacity=".22" filter="url(#bl15)" fill="#5d7f52"><path transform="translate(284.0 148.0) rotate(48.0)" d="M0 0 C-6 -8 -21 -14 -19 -26 C-17 -36 -5 -36 0 -27 C5 -36 17 -36 19 -26 C21 -14 6 -8 0 0Z"/><path transform="translate(284.0 148.0) rotate(138.0)" d="M0 0 C-6 -8 -21 -14 -19 -26 C-17 -36 -5 -36 0 -27 C5 -36 17 -36 19 -26 C21 -14 6 -8 0 0Z"/></g><rect x="2" y="43.4" width="10.8" height="30.4" fill="#d9434f"/><rect x="20.6" y="45.8" width="58" height="25.4" rx="3.4" fill="#d9434f"/><text x="49.6" y="62.9" font-family="Liberation Sans" font-weight="bold" font-size="12.2" fill="#fdf6f0" text-anchor="middle">PART 1</text><path d="M82.6 90.2 C123.1 93.3 164.7 91.3 205.2 84.0 Q210.2 83.8 210.3 88.8 L210.7 106.0 Q210.8 111.0 205.8 111.2 C165.3 111.3 123.7 113.3 83.2 116.2 Q78.2 116.4 78.1 111.4 L77.7 95.4 Q77.6 90.4 82.6 90.2Z" fill="#f46db6" stroke="#fff" stroke-width="1" filter="url(#sh)"/><path d="M92.0 119.8 C132.1 125.6 173.5 128.8 213.6 130.2 Q218.6 130.6 218.9 135.6 L219.7 152.0 Q220.0 157.0 215.0 156.7 C174.7 153.2 133.3 146.0 93.0 148.1 Q88.0 147.8 87.8 142.8 L87.2 124.4 Q87.0 119.4 92.0 119.8Z" fill="#a9d32b" stroke="#fff" stroke-width="1" filter="url(#sh)"/><path d="M83.0 162.8 C123.3 161.5 164.7 159.8 205.0 157.7 Q210.0 157.5 210.2 162.5 L210.8 179.0 Q211.0 184.0 206.0 184.2 C165.7 182.5 124.3 187.3 84.0 189.4 Q79.0 189.6 78.8 184.6 L78.2 168.0 Q78.0 163.0 83.0 162.8Z" fill="#f5993b" stroke="#fff" stroke-width="1" filter="url(#sh)"/><path d="M93.6 192.0 C133.3 197.9 174.1 201.9 213.8 203.8 Q218.8 204.3 218.6 209.3 L218.2 225.6 Q218.0 230.6 213.0 230.1 C173.1 225.1 132.1 218.7 92.2 217.9 Q87.2 217.4 87.5 212.4 L88.3 196.5 Q88.6 191.5 93.6 192.0Z" fill="#90d1f3" stroke="#fff" stroke-width="1" filter="url(#sh)"/><g transform="translate(144.6 101.2) rotate(-1.00) translate(-27.60 4.97)"><text class="cj" x="0" y="0" font-size="13.8" font-weight="bold" fill="#fff" stroke="#fff" stroke-width=".3">谈心态度</text></g><g transform="translate(153.6 138.4) rotate(4.60) translate(-27.60 4.97)"><text class="cj" x="0" y="0" font-size="13.8" font-weight="bold" fill="#1b1bc8" stroke="#1b1bc8" stroke-width=".3">谈心结构</text></g><g transform="translate(144.6 174.0) rotate(-1.60) translate(-27.60 4.97)"><text class="cj" x="0" y="0" font-size="13.8" font-weight="bold" fill="#121212" stroke="#121212" stroke-width=".3">谈心技巧</text></g><g transform="translate(153.8 210.9) rotate(5.20) translate(-27.60 4.97)"><text class="cj" x="0" y="0" font-size="13.8" font-weight="bold" fill="#e21b1b" stroke="#e21b1b" stroke-width=".3">注意事项</text></g><g transform="translate(246.6 62.0) scale(1.14 1)"><text class="cj" x="0" y="0" font-size="31" font-weight="500" fill="#ee72b2">目</text></g><g transform="translate(276.6 97.4)"><text class="cj" x="0" y="0" font-size="31.5" font-weight="500" fill="#b5da52" stroke="#b5da52" stroke-width=".25">录</text></g><text transform="translate(257.4 79.8) rotate(90)" font-family="Liberation Serif" font-size="12" fill="#a9c2cb" textLength="54.6" lengthAdjust="spacingAndGlyphs">CONTENTS</text></svg><div class="a" style="left:597.6px;top:78.6px;width:27.2px;height:324.4px;background:#efefef"></div><div class="a" style="left:587.8px;top:101.6px;width:9.8px;height:285px;background:#e1e1e1"></div><div class="a" style="left:588.6px;top:118.0px;width:7.6px;height:25px;background:#fdfdfd;border:1px solid #dadada;border-radius:3px"></div><svg class="a" style="left:590.48px;top:108.78px" width="2.48" height="1.56"><path d="M0 1.56 H2.48 L1.24 0Z" fill="#8a8a8a"/></svg><svg class="a" style="left:590.90px;top:349.10px" width="2.70" height="1.70"><path d="M0 1.70 H2.70 L1.35 0Z" fill="#8a8a8a"/></svg><svg class="a" style="left:590.90px;top:360.10px" width="2.70" height="1.70"><path d="M0 0 H2.70 L1.35 1.70Z" fill="#8a8a8a"/></svg><svg class="a" style="left:590.90px;top:371.50px" width="2.70" height="1.70"><path d="M0 0 H2.70 L1.35 1.70Z" fill="#8a8a8a"/></svg><div class="a" style="left:605.0px;top:109.0px;width:11px;height:3px;border-top:1px solid #cfcfcf;border-bottom:1px solid #cfcfcf"></div><svg class="a" style="left:605.4px;top:122.8px" width="12" height="12" viewBox="0 0 12 12"><path d="M6 1 L7.4 4.2 L10.8 4.4 L8.2 6.6 L9.2 10 L6 8.2 L2.8 10 L3.8 6.6 L1.2 4.4 L4.6 4.2Z" fill="none" stroke="#5b5b5b" stroke-width=".9"/></svg><svg class="a" style="left:604.60px;top:136.80px;overflow:visible" width="14.5" height="7.0" role="img" aria-label="动画"><text class="cj" x="0" y="6.02" font-size="7" fill="#585858">动画</text></svg><svg class="a" style="left:605.4px;top:153.8px" width="12" height="12" viewBox="0 0 12 12"><rect x="1.4" y="1.4" width="6.4" height="5.6" fill="none" stroke="#5b5b5b" stroke-width=".9"/><rect x="4.6" y="4.8" width="6" height="5.4" fill="#f1f1f1" stroke="#5b5b5b" stroke-width=".9"/></svg><svg class="a" style="left:604.60px;top:168.00px;overflow:visible" width="14.5" height="7.0" role="img" aria-label="切换"><text class="cj" x="0" y="6.02" font-size="7" fill="#585858">切换</text></svg><svg class="a" style="left:605.4px;top:186.4px" width="12" height="12" viewBox="0 0 12 12"><path d="M6 1 L10.6 9.6 H1.4 Z" fill="none" stroke="#5b5b5b" stroke-width=".9"/><ellipse cx="6" cy="9" rx="5" ry="1.6" fill="none" stroke="#5b5b5b" stroke-width=".8"/><path d="M4.4 7 H7.6" stroke="#5b5b5b" stroke-width=".8"/></svg><svg class="a" style="left:601.10px;top:200.00px;overflow:visible" width="21.5" height="7.0" role="img" aria-label="艺术字"><text class="cj" x="0" y="6.02" font-size="7" fill="#585858">艺术字</text></svg><svg class="a" style="left:605.4px;top:219.2px" width="12" height="12" viewBox="0 0 12 12"><g fill="none" stroke="#5b5b5b" stroke-width=".9"><rect x="1.4" y="1.4" width="3.6" height="3.6"/><rect x="7" y="1.4" width="3.6" height="3.6"/><rect x="1.4" y="7" width="3.6" height="3.6"/><rect x="7" y="7" width="3.6" height="3.6"/></g></svg><svg class="a" style="left:604.60px;top:232.80px;overflow:visible" width="14.5" height="7.0" role="img" aria-label="颜色"><text class="cj" x="0" y="6.02" font-size="7" fill="#585858">颜色</text></svg><svg class="a" style="left:605.4px;top:251.2px" width="12" height="12" viewBox="0 0 12 12"><path d="M1.4 1 V10.4 H11" fill="none" stroke="#5b5b5b" stroke-width=".9"/><path d="M3.8 9 V5.6 M6.2 9 V3 M8.6 9 V6.4" stroke="#5b5b5b" stroke-width="1.2"/></svg><svg class="a" style="left:604.60px;top:264.60px;overflow:visible" width="14.5" height="7.0" role="img" aria-label="图表"><text class="cj" x="0" y="6.02" font-size="7" fill="#585858">图表</text></svg><svg class="a" style="left:605.4px;top:283.4px" width="12" height="12" viewBox="0 0 12 12"><path d="M1 2.6 H11 M1 6 H11 M1 9.4 H11" stroke="#5b5b5b" stroke-width=".8"/><circle cx="8" cy="2.6" r="1.2" fill="#f1f1f1" stroke="#5b5b5b" stroke-width=".8"/><circle cx="4" cy="6" r="1.2" fill="#f1f1f1" stroke="#5b5b5b" stroke-width=".8"/><circle cx="7" cy="9.4" r="1.2" fill="#f1f1f1" stroke="#5b5b5b" stroke-width=".8"/></svg><svg class="a" style="left:604.60px;top:297.00px;overflow:visible" width="14.5" height="7.0" role="img" aria-label="属性"><text class="cj" x="0" y="6.02" font-size="7" fill="#585858">属性</text></svg><svg class="a" style="left:605.4px;top:315.4px" width="12" height="12" viewBox="0 0 12 12"><rect x="1.2" y="1.6" width="9.6" height="8.8" rx=".8" fill="none" stroke="#5b5b5b" stroke-width=".9"/><path d="M2.4 8.6 L4.8 5.8 L6.6 7.6 L8 6.2 L9.8 8.6" fill="none" stroke="#5b5b5b" stroke-width=".8"/><circle cx="7.8" cy="4" r=".8" fill="#5b5b5b"/></svg><svg class="a" style="left:604.60px;top:329.00px;overflow:visible" width="14.5" height="7.0" role="img" aria-label="图库"><text class="cj" x="0" y="6.02" font-size="7" fill="#585858">图库</text></svg><svg class="a" style="left:605.4px;top:347.4px" width="12" height="12" viewBox="0 0 12 12"><circle cx="6" cy="6" r="4.6" fill="none" stroke="#5b5b5b" stroke-width=".9"/><path d="M4.2 6.6 Q6 3 7.8 6.6 Q6 8.8 4.2 6.6Z" fill="none" stroke="#5b5b5b" stroke-width=".8"/></svg><svg class="a" style="left:604.60px;top:360.80px;overflow:visible" width="14.5" height="7.0" role="img" aria-label="风格"><text class="cj" x="0" y="6.02" font-size="7" fill="#585858">风格</text></svg><svg class="a" style="left:605.4px;top:380.4px" width="12" height="12" viewBox="0 0 12 12"><path d="M2 3 V1.6 H10 V3 M6 1.6 V10.4 M4.4 10.4 H7.6" fill="none" stroke="#5b5b5b" stroke-width="1"/></svg><svg class="a" style="left:604.60px;top:392.60px;overflow:visible" width="14.5" height="7.0" role="img" aria-label="文本"><text class="cj" x="0" y="6.02" font-size="7" fill="#585858">文本</text></svg><div class="a" style="left:0;top:385.6px;width:597.6px;height:17px;background:#ebebeb;border-top:1px solid #dcdcdc"></div><div class="a" style="left:597.4px;top:395.0px;width:27.4px;height:7.6px;background:#c7cbd2"></div><svg class="a" style="left:0.00px;top:391.40px;overflow:visible" width="53.7" height="7.6" role="img" aria-label="击此处添加备注"><text class="cj" x="0" y="6.54" font-size="7.6" fill="#6a6a6a">击此处添加备注</text></svg><div class="a" style="left:0;top:402.2px;width:625px;height:20px;background:#f6f6f6;border-top:1px solid #dedede"></div><svg class="a" style="left:9.4px;top:408.0px" width="9" height="9" viewBox="0 0 9 9"><circle cx="4.5" cy="4.5" r="3.6" fill="none" stroke="#777" stroke-width=".8"/><path d="M3 3 L6 6 M6 3 L3 6" stroke="#777" stroke-width=".8"/></svg><svg class="a" style="left:21.40px;top:409.00px;overflow:visible" width="36.8" height="7.2" role="img" aria-label="文档未保护"><text class="cj" x="0" y="6.24" font-size="7.3" fill="#777">文档未保护</text></svg><div class="t" style="left:73.4px;top:408.4px;font-size:8px;color:#666;font-weight:bold">T</div><div class="t" style="left:77.8px;top:412.4px;font-size:5px;color:#666">o</div><svg class="a" style="left:86.00px;top:409.00px;overflow:visible" width="29.5" height="7.2" role="img" aria-label="缺失字体"><text class="cj" x="0" y="6.24" font-size="7.3" fill="#777">缺失字体</text></svg><svg class="a" style="left:335.4px;top:408.0px" width="12" height="9" viewBox="0 0 12 9"><path d="M.5 1.4 H8.5 M.5 4.4 H8.5 M.5 7.4 H6" stroke="#666" stroke-width="1"/><circle cx="10.6" cy="5.6" r=".7" fill="#666"/></svg><div class="a" style="left:352.6px;top:405.6px;width:14px;height:13.4px;background:#d2d2d2;border-radius:1px"></div><svg class="a" style="left:353.6px;top:406.8px" width="64" height="11" viewBox="0 0 64 11"><g fill="none" stroke="#666" stroke-width=".9"><rect x="1.4" y="1.4" width="8.4" height="8.2"/><path d="M3.6 1.4 V9.6"/><rect x="18" y="1.2" width="3.4" height="3.4"/><rect x="23.4" y="1.2" width="3.4" height="3.4"/><rect x="18" y="6.4" width="3.4" height="3.4"/><rect x="23.4" y="6.4" width="3.4" height="3.4"/><path d="M35 2 Q37.4 1 39.6 2.2 Q41.8 1 44 2 V9.4 Q41.8 8.6 39.6 9.6 Q37.4 8.6 35 9.4Z M39.6 2.2 V9.6"/><rect x="51.4" y="1.4" width="8.4" height="7.2" rx="1"/><circle cx="58.6" cy="7.8" r="2" fill="#666"/></g></svg><div class="a" style="left:422.2px;top:404.8px;width:19.6px;height:15.4px;background:#f2682f;border-radius:2.4px"></div><svg class="a" style="left:428.6px;top:408.0px" width="8" height="9" viewBox="0 0 8 9"><path d="M1 .8 L7.2 4.5 L1 8.2Z" fill="#fff"/></svg><svg class="a" style="left:445.90px;top:412.10px" width="2.70" height="1.70"><path d="M0 0 H2.70 L1.35 1.70Z" fill="#666"/></svg><div class="t" style="left:456.4px;top:408.6px;font-size:7.8px;color:#555">60%</div><svg class="a" style="left:473.90px;top:412.10px" width="2.70" height="1.70"><path d="M0 0 H2.70 L1.35 1.70Z" fill="#666"/></svg><svg class="a" style="left:484.4px;top:407.0px" width="132" height="11" viewBox="0 0 132 11"><path d="M1 5.5 H8" stroke="#555" stroke-width="1.2"/><path d="M14 5.5 H104" stroke="#a8a8a8" stroke-width=".8"/><circle cx="37.4" cy="5.5" r="3" fill="#f6f6f6" stroke="#666" stroke-width=".9"/><path d="M108.4 5.5 H115.6 M112 1.9 V9.1" stroke="#555" stroke-width="1.1"/><path d="M122.6 4 V2.2 H124.6 M127.4 2.2 H129.4 V4 M129.4 7 V8.8 H127.4 M124.6 8.8 H122.6 V7" fill="none" stroke="#666" stroke-width=".9"/></svg></div><div class="a" style="left:163px;top:2px;width:2px;height:422px;background:linear-gradient(90deg,rgba(0,0,0,.04),rgba(0,0,0,.16))"></div><div id="rp" class="a"><div class="a" style="left:0;top:0;width:139px;height:17px;background:linear-gradient(180deg,#0f0f11 70%,#1b1b1d)"></div><div class="a" style="left:3.4px;top:18.3px;width:131.4px;height:74.0px;border:1px solid #17694f;box-shadow:inset 0 0 0 .6px #1f7c61;overflow:hidden;background:#363a30"><svg class="a" style="left:0;top:0" width="129.4" height="72" viewBox="0 0 132 74" preserveAspectRatio="none"><defs><filter id="vb" x="-10%" y="-10%" width="120%" height="120%"><feGaussianBlur stdDeviation=".85"/></filter><filter id="vb2" x="-10%" y="-10%" width="120%" height="120%"><feGaussianBlur stdDeviation="1.7"/></filter></defs><rect width="132" height="74" fill="#41453a"/><g filter="url(#vb2)"><rect x="0" y="0" width="132" height="6" fill="#181a16"/><rect x="0" y="0" width="7" height="74" fill="#262923"/><rect x="125" y="0" width="7" height="74" fill="#2a2d27"/><rect x="33" y="7" width="15" height="6" fill="#747a6e"/><rect x="10" y="17" width="36" height="5.5" fill="#5c6054"/><rect x="8" y="24" width="38" height="5" fill="#33362e"/><rect x="29" y="31" width="18" height="9" fill="#858a79"/><rect x="8" y="31" width="18" height="8" fill="#50554a"/><rect x="17" y="43" width="29" height="12.5" fill="#72786a"/><rect x="6" y="58" width="28" height="12" fill="#454b44"/><rect x="84" y="3.5" width="40" height="4" fill="#62675b"/><rect x="86" y="13" width="38" height="5" fill="#5c6155"/><rect x="84" y="21" width="40" height="7" fill="#3a3e35"/><rect x="84" y="31" width="40" height="7" fill="#757c6e"/><rect x="88" y="41.6" width="37" height="14" fill="#8a9484"/><rect x="92" y="57" width="33" height="12" fill="#75806f"/></g><g filter="url(#vb)"><path d="M30 74 Q36 62 50 57 L58 54 L76 54 L86 57 Q100 62 108 74Z" fill="#66aacd"/><path d="M76 56 L86 57 Q100 62 108 74 L84 74Z" fill="#7fc1db"/><path d="M104 74 Q110 66 124 66 L124 74Z" fill="#93ab92" opacity=".8"/><path d="M50 74 Q52 62 58 56 L62 74Z M82 74 Q81 62 76 56 L72 74Z" fill="#4787a6"/><path d="M57 56 L57 74 L77 74 L76 56Z" fill="#c09a80"/><path d="M57.4 66 L60 74 M76.6 66 L74 74" stroke="#c23f2b" stroke-width="2.2" fill="none"/><ellipse cx="64.5" cy="28" rx="17.2" ry="14" fill="#3d3e35"/><ellipse cx="64.5" cy="23.4" rx="15.6" ry="10" fill="#697167"/><ellipse cx="64" cy="18.6" rx="10" ry="3.6" fill="#7e877c"/><path d="M48.8 36 Q48.4 27 64.4 26.4 Q80.4 27 80.2 36 Q80.8 52 73 62 Q64.4 69 56 62 Q48.2 52 48.8 36Z" fill="#c09f86"/><ellipse cx="59" cy="46" rx="5.4" ry="6.4" fill="#c9aa8e" opacity=".75"/><path d="M47.6 37.4 H62 M66.6 37.4 H81" stroke="#4c4438" stroke-width="1.2"/><ellipse cx="55.6" cy="37.8" rx="2.4" ry="1.2" fill="#3a3028"/><ellipse cx="70.6" cy="37.8" rx="2.4" ry="1.2" fill="#3a3028"/><path d="M61 45.6 Q62.4 47 64.4 45.8" stroke="#8f6c58" stroke-width="1" fill="none"/><ellipse cx="60.6" cy="53.8" rx="5.4" ry="1.9" fill="#7f4f46"/></g></svg><div class="a" style="left:0;bottom:0;width:32.6px;height:10.4px;background:#0a0e0b"></div><svg class="a" style="left:1.6px;bottom:1.6px" width="20" height="8" viewBox="0 0 20 8"><rect x=".4" y=".2" width="8.2" height="5.8" rx=".8" fill="#fff"/><rect x="2.6" y="1.8" width="3.8" height="2.4" fill="#0b0f0c"/><rect x="2.8" y="6.6" width="3.4" height="1" fill="#fff"/><rect x="12.6" y="0" width="3" height="5" rx="1.5" fill="#fff"/><path d="M11.4 3.6 a2.7 2.7 0 0 0 5.4 0" fill="none" stroke="#fff" stroke-width=".8"/><path d="M14.1 6.2 V7.6" stroke="#fff" stroke-width=".8"/></svg><svg class="a" style="left:21px;bottom:0" width="13" height="10.4" role="img" aria-label="程平"><text class="cj" x="0" y="7.4" font-size="5.4" fill="#fff">程平</text></svg></div><div class="tile" style="left:4px;top:95.0px"><div class="lab" style="left:0;width:46.6px"><svg class="a" style="left:3px;top:.6px" width="7" height="8" viewBox="0 0 9 11"><rect x="3" y=".6" width="3.2" height="5.6" rx="1.6" fill="#ddd"/><path d="M1.6 4.6 v.8 a3 3 0 0 0 6 0 v-.8" fill="none" stroke="#ddd" stroke-width=".9"/><path d="M4.6 8.4 v1.6 M2.8 10.2 h3.6" stroke="#ddd" stroke-width=".9"/><path d="M.8 8.8 L7.6 1.2" stroke="#e0605c" stroke-width="1.2"/></svg><svg class="a" style="left:12.4px;top:0" width="32.8" height="9" role="img" aria-label="文字我都抢先"><text class="cj" x="0" y="6.5" font-size="5.3" fill="#fff">文字我都抢先</text></svg></div></div><div class="tile" style="left:4px;top:173.2px"><div class="a" style="left:0;bottom:0;width:10.2px;height:9.2px;background:#f08a2c"></div><svg class="a" style="left:1.5px;bottom:.8px" width="7.4" height="7.4" viewBox="0 0 8 8"><circle cx="4" cy="2.4" r="1.7" fill="#fff"/><path d="M.8 7.6 Q.8 4.4 4 4.4 Q7.2 4.4 7.2 7.6Z" fill="#fff"/></svg><div class="lab" style="left:10.2px;width:25.4px"><svg class="a" style="left:3px;top:.6px" width="7" height="8" viewBox="0 0 9 11"><rect x="3" y=".6" width="3.2" height="5.6" rx="1.6" fill="#ddd"/><path d="M1.6 4.6 v.8 a3 3 0 0 0 6 0 v-.8" fill="none" stroke="#ddd" stroke-width=".9"/><path d="M4.6 8.4 v1.6 M2.8 10.2 h3.6" stroke="#ddd" stroke-width=".9"/><path d="M.8 8.8 L7.6 1.2" stroke="#e0605c" stroke-width="1.2"/></svg><svg class="a" style="left:12.4px;top:0" width="11.6" height="9" role="img" aria-label="严实"><text class="cj" x="0" y="6.5" font-size="5.3" fill="#fff">严实</text></svg></div></div><div class="tile" style="left:4px;top:251.2px"><div class="lab" style="left:0;width:30.7px"><svg class="a" style="left:3px;top:.6px" width="7" height="8" viewBox="0 0 9 11"><rect x="3" y=".6" width="3.2" height="5.6" rx="1.6" fill="#ddd"/><path d="M1.6 4.6 v.8 a3 3 0 0 0 6 0 v-.8" fill="none" stroke="#ddd" stroke-width=".9"/><path d="M4.6 8.4 v1.6 M2.8 10.2 h3.6" stroke="#ddd" stroke-width=".9"/><path d="M.8 8.8 L7.6 1.2" stroke="#e0605c" stroke-width="1.2"/></svg><svg class="a" style="left:12.4px;top:0" width="16.9" height="9" role="img" aria-label="王薇薇"><text class="cj" x="0" y="6.5" font-size="5.3" fill="#fff">王薇薇</text></svg></div></div><div class="tile" style="left:4px;top:329.8px;background:#1b1b1d;border-color:#2c2c2f"><div class="lab" style="left:0;width:30.7px;opacity:.55"><svg class="a" style="left:3px;top:.6px" width="7" height="8" viewBox="0 0 9 11"><rect x="3" y=".6" width="3.2" height="5.6" rx="1.6" fill="#ddd"/><path d="M1.6 4.6 v.8 a3 3 0 0 0 6 0 v-.8" fill="none" stroke="#ddd" stroke-width=".9"/><path d="M4.6 8.4 v1.6 M2.8 10.2 h3.6" stroke="#ddd" stroke-width=".9"/><path d="M.8 8.8 L7.6 1.2" stroke="#e0605c" stroke-width="1.2"/></svg><svg class="a" style="left:12.4px;top:0" width="16.9" height="9" role="img" aria-label="陈先蕾"><text class="cj" x="0" y="6.5" font-size="5.3" fill="#fff">陈先蕾</text></svg></div></div><svg class="a" style="left:0;top:0" width="139" height="422" viewBox="0 0 139 422"><defs><filter id="bl1"><feGaussianBlur stdDeviation=".6"/></filter><filter id="bl2"><feGaussianBlur stdDeviation=".9"/></filter><clipPath id="c1"><circle cx="68.7" cy="128.9" r="18.1"/></clipPath><clipPath id="c3"><circle cx="68.7" cy="284.9" r="18.1"/></clipPath></defs><circle cx="68.7" cy="128.9" r="18.1" fill="#6db7f2"/><g transform="translate(68.7 128.9)"><g filter="url(#bl1)"><ellipse cx="-10.8" cy="4.4" rx="1.8" ry="2.4" fill="#f1d6bf"/><ellipse cx="10.8" cy="4.4" rx="1.8" ry="2.4" fill="#f1d6bf"/><ellipse cx="0" cy="4.2" rx="10.4" ry="8.8" fill="#f6e2cf"/><path d="M-11.2 2 Q-12.4 -13.8 0 -13.8 Q12.4 -13.8 11.2 2 Q9.6 -3 5.4 -2.6 Q0 -5 -5.4 -2.6 Q-9.6 -3 -11.2 2Z" fill="#17171d"/><rect x="-8.8" y=".4" width="7.4" height="5.2" rx="1.2" fill="#fff" fill-opacity=".35" stroke="#24242a" stroke-width=".9"/><rect x="1.4" y=".4" width="7.4" height="5.2" rx="1.2" fill="#fff" fill-opacity=".35" stroke="#24242a" stroke-width=".9"/><path d="M-1.4 2.6 H1.4" stroke="#24242a" stroke-width=".9"/><circle cx="-5" cy="3" r=".8" fill="#222"/><circle cx="5" cy="3" r=".8" fill="#222"/><path d="M-2.4 8.6 Q0 10.4 2.4 8.6" stroke="#b4605a" stroke-width=".8" fill="none"/><path d="M-9.6 18.4 Q-8 12.4 -3 12.6 L0 14.4 L3 12.6 Q8 12.4 9.6 18.4 Q0 20 -9.6 18.4Z" fill="#e4e8ec"/><path d="M-1.4 14 L0 18.6 L1.4 14Z" fill="#8a8f98"/><path d="M6 17 Q5.4 11.6 9.4 9.4 Q11.6 10 10.6 13 Q12.6 14.6 10.4 17.6Z" fill="#f3dcc7" stroke="#8f7a6a" stroke-width=".4"/></g></g><circle cx="68.7" cy="206.5" r="18.1" fill="#1977f8"/><text class="cj" x="60.1" y="209.7" font-size="8.6" fill="#fff">严实</text><circle cx="68.7" cy="284.9" r="18.1" fill="#e0b690"/><g clip-path="url(#c3)"><g filter="url(#bl2)"><circle cx="68.7" cy="284.9" r="11.6" fill="#c98f6a"/><ellipse cx="66.7" cy="284.9" rx="7" ry="10.4" fill="#5b2f26" transform="rotate(-18 66.7 284.9)"/><ellipse cx="72.7" cy="286.9" rx="4.6" ry="7.6" fill="#f0c4b6"/><ellipse cx="73.7" cy="287.9" rx="3" ry="4" fill="#e58f9a" opacity=".6"/></g></g><circle cx="68.7" cy="362.7" r="18.1" fill="#1667e0"/><text class="cj" x="59.9" y="365.9" font-size="8.8" fill="#dfe6f6">先蕾</text></svg><div class="a" style="left:0;top:323.0px;width:139px;height:100px;background:linear-gradient(180deg,rgba(8,8,10,0),rgba(8,8,10,.55))"></div></div><div class="a" style="left:781.4px;top:202.6px;width:8px;height:18.8px;background:#59595b;border-radius:2px 0 0 2px"></div><svg class="a" style="left:783px;top:207.5px" width="5" height="9" viewBox="0 0 5 9"><path d="M1 1 L4 4.5 L1 8" fill="none" stroke="#cfcfcf" stroke-width="1"/></svg></body></html>
